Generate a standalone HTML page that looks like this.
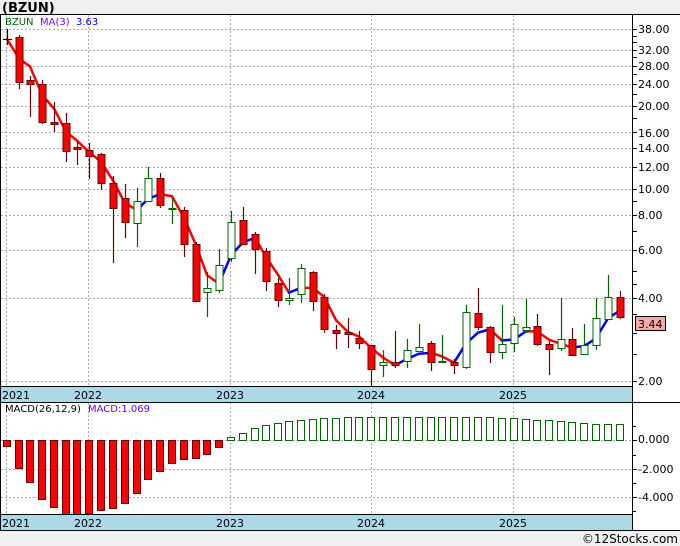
<!DOCTYPE html>
<html><head><meta charset="utf-8"><style>
html,body{margin:0;padding:0;background:#f0f0f0;}
body{width:680px;height:546px;position:relative;overflow:hidden;font-family:"DejaVu Sans","Liberation Sans",sans-serif;}
svg{position:absolute;left:0;top:0;}
</style></head><body>
<svg id="s" width="680" height="546" xmlns="http://www.w3.org/2000/svg" font-family="DejaVu Sans, Liberation Sans, sans-serif">
<rect x="0" y="14" width="680" height="516" fill="#fff"/>
<text x="2" y="12" font-size="13" font-weight="bold" fill="#000">(BZUN)</text>
<g id="grid"></g>
<g id="chart"></g>
<rect x="1" y="387" width="631" height="15" fill="#add8e6"/>
<rect x="1" y="515" width="631" height="15" fill="#add8e6"/>
<line x1="0" y1="386.5" x2="632" y2="386.5" stroke="#000"/>
<line x1="0" y1="514.5" x2="632" y2="514.5" stroke="#000"/>
<g font-size="11" fill="#000">
<text x="2" y="399">2021</text><text x="74" y="399">2022</text><text x="216" y="399">2023</text><text x="357" y="399">2024</text><text x="499" y="399">2025</text>
<text x="2" y="527">2021</text><text x="74" y="527">2022</text><text x="216" y="527">2023</text><text x="357" y="527">2024</text><text x="499" y="527">2025</text>
</g>
<g font-size="10">
<text x="5" y="25" fill="#006400">BZUN</text><text x="40" y="25" fill="#8000ff">MA(3)</text><text x="76" y="25" fill="#0000ff">3.63</text>
<text x="5" y="412" fill="#000">MACD(26,12,9)</text><text x="88" y="412" fill="#6a00ff">MACD:1.069</text>
</g>
<g font-size="11" fill="#000" id="axis">
<text x="638" y="33">38.00</text><text x="638" y="54">32.00</text><text x="638" y="70">28.00</text><text x="638" y="88">24.00</text><text x="638" y="110">20.00</text><text x="638" y="137">16.00</text><text x="638" y="152">14.00</text><text x="638" y="171">12.00</text><text x="638" y="193">10.00</text><text x="638" y="219">8.00</text><text x="638" y="254">6.00</text><text x="638" y="302">4.00</text><text x="638" y="385">2.00</text>
<text x="638" y="443">0.000</text><text x="638" y="473">-2.000</text><text x="638" y="501">-4.000</text>
</g>
<rect x="635.5" y="316.5" width="30" height="14" fill="#f4a8a8" stroke="#000"/>
<text x="638" y="328" font-size="11" fill="#000">3.44</text>
<line x1="0" y1="14.5" x2="680" y2="14.5" stroke="#000"/>
<line x1="0" y1="402.5" x2="680" y2="402.5" stroke="#000"/>
<line x1="0" y1="530.5" x2="680" y2="530.5" stroke="#000"/>
<line x1="0.5" y1="14" x2="0.5" y2="530" stroke="#000"/>
<line x1="632.5" y1="14" x2="632.5" y2="530" stroke="#000"/>
<text x="678" y="543" font-size="12" fill="#000" text-anchor="end">©12Stocks.com</text>
</svg>
<script>
var NS="http://www.w3.org/2000/svg";
function el(p,t,a){var e=document.createElementNS(NS,t);for(var k in a)e.setAttribute(k,a[k]);p.appendChild(e);return e;}
var g=document.getElementById('grid'),c=document.getElementById('chart');
function Y(p){return 463.8-119.5*Math.log(p);}
[38,32,28,24,20,16,14,12,10,8,6,4,2].forEach(function(p){var y=Math.round(Y(p))+0.5;el(g,'line',{x1:1,y1:y,x2:632,y2:y,stroke:'#aaa','stroke-dasharray':'2,2'});});
[36,34,30,26,22,18,9,7,5,4.5,3.5,3,2.5].forEach(function(p){var y=Math.round(Y(p))+0.5;el(g,'line',{x1:632,y1:y,x2:637,y2:y,stroke:'#000'});});
[38,32,28,24,20,16,14,12,10,8,6,4,2].forEach(function(p){var y=Math.round(Y(p))+0.5;el(g,'line',{x1:632,y1:y,x2:637,y2:y,stroke:'#000'});});
[440,469,497].forEach(function(y){el(g,'line',{x1:1,y1:y+.5,x2:632,y2:y+.5,stroke:'#aaa','stroke-dasharray':'2,2'});el(g,'line',{x1:632,y1:y+.5,x2:637,y2:y+.5,stroke:'#000'});});
[426,455,483,511].forEach(function(y){el(g,'line',{x1:632,y1:y+.5,x2:636,y2:y+.5,stroke:'#000'});});
[6,88,230,371,513].forEach(function(x){el(g,'line',{x1:x+.5,y1:15,x2:x+.5,y2:386,stroke:'#aaa','stroke-dasharray':'2,2'});el(g,'line',{x1:x+.5,y1:403,x2:x+.5,y2:514,stroke:'#aaa','stroke-dasharray':'2,2'});});
// [x,type,wt,wb,bt,bb]
var d=[[7,'k',29,45,39,39],[19,'r',35,89,37,82],[30,'r',76,117,80,84],[42,'r',80,124,84,122],[54,'r',102,132,122,124],[66,'r',113,162,123,151],[77,'r',142,165,147,149],[89,'r',143,179,150,156],[101,'r',153,190,154,183],[113,'r',176,263,183,208],[125,'r',184,238,198,222],[137,'g',188,247,201,223],[148,'g',167,202,178,201],[160,'r',173,208,178,205],[172,'g',198,224,208,209],[184,'r',207,257,210,244],[196,'r',242,301,244,301],[207,'g',272,317,288,292],[219,'g',249,293,265,290],[231,'g',211,262,222,258],[243,'r',207,245,220,244],[255,'r',232,274,234,249],[266,'r',248,291,251,281],[278,'r',278,307,283,300],[289,'g',278,305,298,300],[301,'g',264,303,268,294],[313,'r',271,311,272,301],[324,'r',294,333,297,329],[336,'r',325,349,330,333],[348,'r',318,348,332,334],[359,'r',331,349,338,343],[371,'r',345,387,345,369],[383,'g',350,377,362,365],[395,'r',331,368,362,365],[407,'g',339,368,350,361],[419,'g',324,352,347,351],[431,'r',341,371,343,362],[442,'g',335,362,361,362],[454,'r',359,374,362,365],[466,'g',305,369,312,367],[478,'r',288,330,313,327],[490,'r',326,363,327,352],[502,'g',305,359,344,352],[514,'g',317,352,324,343],[526,'g',299,333,327,330],[537,'r',314,346,326,344],[549,'r',341,375,344,349],[561,'g',298,351,339,348],[572,'r',328,356,339,355],[584,'g',324,354,345,354],[596,'g',298,350,318,345],[608,'g',275,319,297,319],[620,'r',291,319,297,317]];
var P=function(y){return Math.exp((463.8-y)/119.5);};
var closes=d.map(function(r){return P(r[1]=='g'?r[4]:r[5]);});
var ma=closes.map(function(v,i){var s=0,n=0;for(var j=Math.max(0,i-2);j<=i;j++){s+=closes[j];n++;}return s/n;});
for(var i=1;i<d.length;i++){el(c,'line',{x1:d[i-1][0],y1:Y(ma[i-1]),x2:d[i][0],y2:Y(ma[i]),stroke:ma[i]>ma[i-1]?'#0000ff':'#ff0000','stroke-width':2.5,'stroke-linecap':'round'});}
d.forEach(function(r){var x=r[0],col=r[1]=='g'?'#006400':(r[1]=='k'?'#000':'#6b0000');
 el(c,'line',{x1:x+.5,y1:r[2],x2:x+.5,y2:r[3],stroke:col,'stroke-width':1.2});
 var h=Math.max(1,r[5]-r[4]);
 if(r[1]=='k'){el(c,'line',{x1:x-4,y1:r[4]+.5,x2:x+5,y2:r[4]+.5,stroke:'#000'});return;}
 el(c,'rect',{x:x-3,y:r[4]+.5,width:7,height:h,fill:r[1]=='g'?'#fff':'#ff0000',stroke:col,'stroke-width':1});
});
// macd
var m=[446,468,482,499,507,515,515,513,510,508,503,493,479,471,463,459,458,454,447,437,433,428,425,423,421,420,419,418,418,417,417,417,417,417,417,417,417,417,417,417,417,417,418,418,419,420,420,421,422,423,424,424,424];
d.forEach(function(r,i){var x=r[0],y=m[i];
 if(y>440){el(c,'rect',{x:x-3.5,y:440.5,width:7,height:y-440,fill:'#ff0000',stroke:'#6b0000'});}
 else{el(c,'rect',{x:x-3.5,y:y+.5,width:7,height:440-y,fill:'#fff',stroke:'#006400'});}
});
</script>
</body></html>
